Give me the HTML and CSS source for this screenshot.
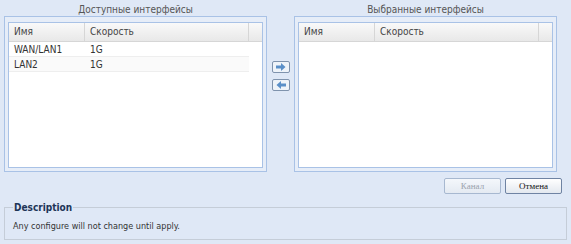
FILE: index.html
```html
<!DOCTYPE html>
<html lang="ru">
<head>
    <meta charset="UTF-8">
    <title>Интерфейсы</title>
    <link rel="stylesheet" href="styles.css">
</head>
<body>
    <div class="selector">
        <div class="column">
            <div class="column-title">Доступные интерфейсы</div>
            <div class="panel">
                <div class="grid">
                    <div class="grid-header">
                        <div class="hcell col-name">Имя</div>
                        <div class="hcell col-speed">Скорость</div>
                        <div class="hcell col-gutter"></div>
                    </div>
                    <div class="grid-row">
                        <div class="cell col-name">WAN/LAN1</div>
                        <div class="cell col-speed">1G</div>
                    </div>
                    <div class="grid-row alt">
                        <div class="cell col-name">LAN2</div>
                        <div class="cell col-speed">1G</div>
                    </div>
                </div>
            </div>
        </div>

        <div class="move-buttons">
            <button class="move-btn" title="Добавить">
                <svg width="18" height="12" viewBox="0 0 18 12">
                    <rect x="0.5" y="0.5" width="17" height="11" rx="1.5" fill="#eef3f9" stroke="#7f93ad"/>
                    <path d="M4 4.5h5v-2.5l4.5 4-4.5 4v-2.5h-5z" fill="#5a8fc8"/>
                </svg>
            </button>
            <button class="move-btn" title="Удалить">
                <svg width="18" height="12" viewBox="0 0 18 12">
                    <rect x="0.5" y="0.5" width="17" height="11" rx="1.5" fill="#eef3f9" stroke="#7f93ad"/>
                    <path d="M14 4.5h-5v-2.5l-4.5 4 4.5 4v-2.5h5z" fill="#5a8fc8"/>
                </svg>
            </button>
        </div>

        <div class="column">
            <div class="column-title">Выбранные интерфейсы</div>
            <div class="panel">
                <div class="grid">
                    <div class="grid-header">
                        <div class="hcell col-name">Имя</div>
                        <div class="hcell col-speed">Скорость</div>
                        <div class="hcell col-gutter"></div>
                    </div>
                </div>
            </div>
        </div>
    </div>

    <div class="actions">
        <button class="btn" disabled>Канал</button>
        <button class="btn">Отмена</button>
    </div>

    <fieldset class="description">
        <legend>Description</legend>
        <p>Any configure will not change until apply.</p>
    </fieldset>
</body>
</html>
```

FILE: styles.css
```css
body {
    margin: 0;
    padding: 4px 0 0;
    background-color: #dfe8f6;
    font-family: Tahoma, 'DejaVu Sans Condensed', 'DejaVu Sans', sans-serif;
    font-size: 10px;
    color: #333;
}

.selector {
    display: flex;
    padding: 0 4px;
}

.column {
    width: 263px;
}

.column-title {
    height: 12px;
    line-height: 12px;
    text-align: center;
    color: #555;
}

.panel {
    height: 146px;
    padding: 5px 3px 3px;
    border: 1px solid #a9c2e6;
    background-color: #e6edf8;
}

.grid {
    height: 144px;
    border: 1px solid #a9c2e6;
    background-color: white;
}

.grid-header {
    display: flex;
    height: 18px;
    background: linear-gradient(#f9f9f9, #e8e8e8);
    border-bottom: 1px solid #d6d6d6;
}

.hcell,
.cell {
    box-sizing: border-box;
    padding-left: 5px;
    line-height: 18px;
    white-space: nowrap;
}

.hcell {
    border-right: 1px solid #d6d6d6;
    color: #444;
}

.col-name {
    width: 76px;
}

.col-speed {
    width: 164px;
}

.col-gutter {
    flex: 1;
    border-right: none;
}

.grid-row {
    display: flex;
    width: 240px;
    height: 14px;
    border-bottom: 1px solid #eeeeee;
}

.grid-row .cell {
    line-height: 15px;
    color: #333;
}

.grid-row.alt {
    background-color: #fafafa;
}

.move-buttons {
    width: 27px;
    display: flex;
    flex-direction: column;
    align-items: center;
    gap: 6px;
    padding-top: 57px;
}

.move-btn {
    width: 18px;
    height: 12px;
    padding: 0;
    border: none;
    background: none;
    cursor: pointer;
}

.move-btn svg {
    display: block;
}

.actions {
    display: flex;
    justify-content: flex-end;
    gap: 4px;
    padding: 6px 9px 0 0;
}

.btn {
    width: 57px;
    height: 16px;
    padding: 0;
    border: 1px solid #6f83a3;
    border-radius: 2px;
    background: linear-gradient(#ffffff, #e3e8ef);
    font-family: 'Liberation Serif', serif;
    font-size: 9px;
    color: #111;
    cursor: pointer;
}

.btn:disabled {
    border-color: #a7b8d0;
    background: linear-gradient(#f4f7fb, #e4eaf2);
    color: #9aa2ad;
    cursor: default;
}

.description {
    margin: 8px 4px 0;
    padding: 8px 8px 8px;
    border: 1px solid #c5cdd8;
    font-size: 9px;
}

.description legend {
    padding: 0 1px;
    font-size: 10px;
    font-weight: bold;
    color: #1d3557;
}

.description p {
    margin: 0;
    color: #333;
}
```
